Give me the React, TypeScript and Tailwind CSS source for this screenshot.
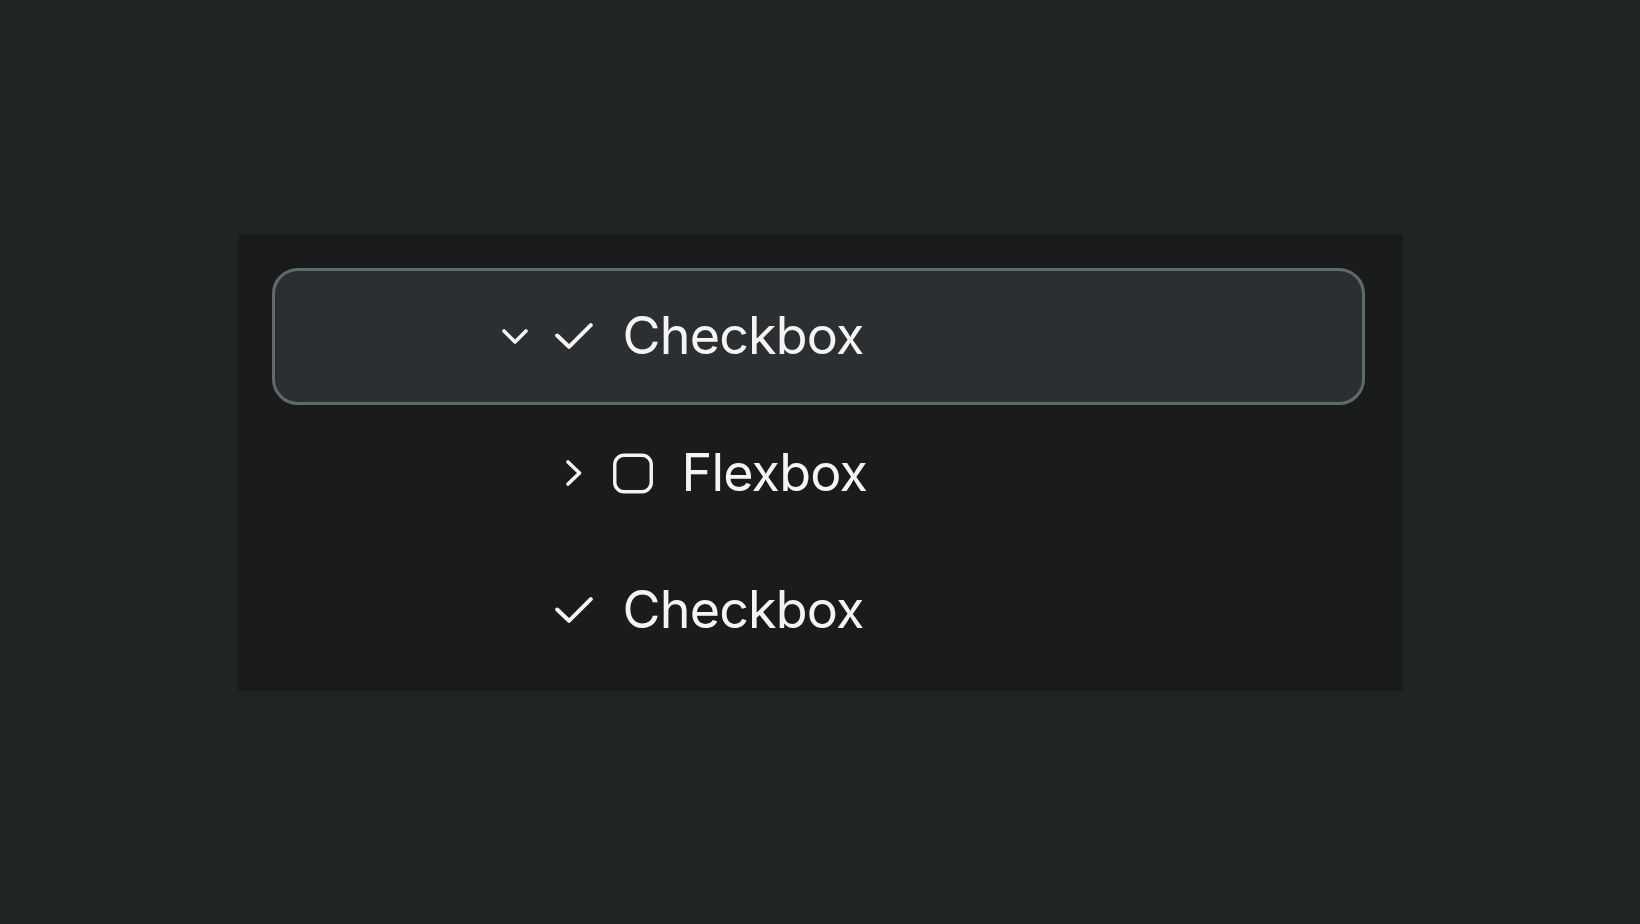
import React from "react";

function ChevronDown() {
  return (
    <svg width="26" height="15" viewBox="0 0 26 15" fill="none">
      <path d="M2 2 L13 13 L24 2" stroke="#f4f4f4" strokeWidth="3.6" strokeLinecap="round" strokeLinejoin="round" />
    </svg>
  );
}

function ChevronRight() {
  return (
    <svg width="16" height="26" viewBox="0 0 16 26" fill="none">
      <path d="M2 2 L13.5 13 L2 24" stroke="#f4f4f4" strokeWidth="3.6" strokeLinecap="round" strokeLinejoin="round" />
    </svg>
  );
}

function Check() {
  return (
    <svg width="38" height="26" viewBox="0 0 38 26" fill="none">
      <path d="M2.2 12.5 L14 23.8 L35.8 2.2" stroke="#f4f4f4" strokeWidth="4" strokeLinecap="round" strokeLinejoin="round" />
    </svg>
  );
}

function Square() {
  return (
    <svg width="41" height="41" viewBox="0 0 41 41" fill="none">
      <rect x="1.8" y="1.8" width="37.4" height="37.4" rx="9.5" stroke="#f4f4f4" strokeWidth="3.5" />
    </svg>
  );
}

type Item = {
  label: string;
  depth: number;
  chevron: "down" | "right" | null;
  icon: "check" | "square";
  selected?: boolean;
};

const items: Item[] = [
  { label: "Checkbox", depth: 0, chevron: "down", icon: "check", selected: true },
  { label: "Flexbox", depth: 1, chevron: "right", icon: "square" },
  { label: "Checkbox", depth: 0, chevron: null, icon: "check" },
];

export default function App() {
  return (
    <div
      className="flex min-h-screen w-full items-center justify-center bg-[#1f2424]"
      style={{ fontFamily: "Inter, 'Noto Sans', sans-serif" }}
    >
      <div className="flex h-[457px] w-[1165px] flex-col bg-[#1a1c1c] pl-[34px] pr-[38px] pt-[34px]">
        {items.map((it, i) => (
          <div
            key={i}
            className={
              it.selected
                ? "flex h-[137px] items-center rounded-[26px] border-[3px] border-[#5f6a6c] bg-[#2c2f31]"
                : "flex h-[137px] items-center rounded-[26px] border-[3px] border-transparent"
            }
          >
            <div className={it.depth === 0 ? "w-[220px] shrink-0" : "w-[279px] shrink-0"} />
            <div className="mr-[19px] flex h-[40px] w-[40px] shrink-0 items-center justify-center">
              {it.chevron === "down" && <ChevronDown />}
              {it.chevron === "right" && <ChevronRight />}
            </div>
            <div className="mr-[29px] flex h-[40px] w-[40px] shrink-0 items-center justify-center">
              {it.icon === "check" ? <Check /> : <Square />}
            </div>
            <span className="text-[52px] leading-none tracking-[-0.8px] text-[#f4f4f4]">{it.label}</span>
          </div>
        ))}
      </div>
    </div>
  );
}
